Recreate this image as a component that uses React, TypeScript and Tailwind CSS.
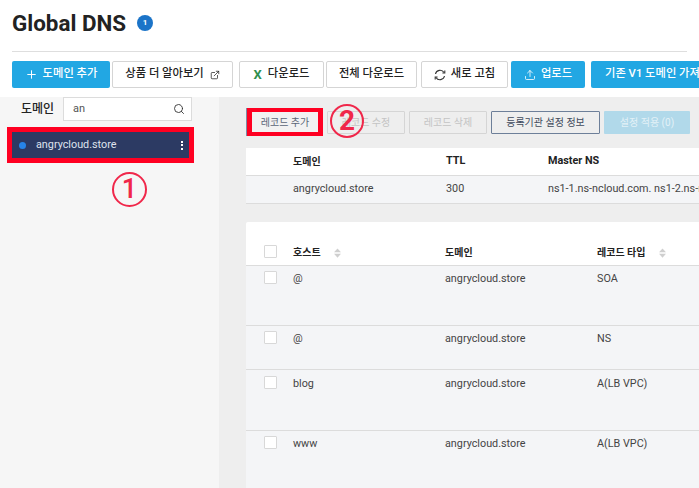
import { Plus, ExternalLink, Upload, Search } from "lucide-react";
import type { ReactNode } from "react";

const font = { fontFamily: '"Roboto", "Noto Sans CJK KR", sans-serif' };

function Check() {
  return <span className="block w-[13px] h-[13px] bg-white border border-[#d8d8d8] rounded-[1px]" />;
}

function Sort() {
  return (
    <svg width="7" height="10" viewBox="0 0 7 10" className="ml-[13px] mt-[1px] shrink-0">
      <path d="M3.5 0.5 L7 4.3 H0 Z" fill="#cfcfcf" />
      <path d="M3.5 9.7 L7 5.7 H0 Z" fill="#cfcfcf" />
    </svg>
  );
}

function Refresh() {
  return (
    <svg width="12" height="12" viewBox="0 0 12 12" fill="none" stroke="#333" strokeWidth="1.1">
      <path d="M1.5 5 A4.6 4.6 0 0 1 10 3.6" />
      <path d="M10.5 7 A4.6 4.6 0 0 1 2 8.4" />
      <path d="M10.8 1.6 V4 H8.4" fill="none" />
      <path d="M1.2 10.4 V8 H3.6" fill="none" />
    </svg>
  );
}

function TopBtn({ className, children }: { className: string; children: ReactNode }) {
  return (
    <div className={`h-[27px] flex items-center justify-center rounded-[2px] text-[11.3px] font-medium shrink-0 ${className}`}>
      {children}
    </div>
  );
}

const white = "bg-white border border-[#d5d5d5] text-[#222]";
const blue = "bg-[#22a7e3] text-white";

const rows = [
  { h: "@", t: "SOA", height: "h-[60px]", pt: "pt-[5px]" },
  { h: "@", t: "NS", height: "h-[44px]", pt: "pt-[5px]" },
  { h: "blog", t: "A(LB VPC)", height: "h-[61px]", pt: "pt-[6px]" },
  { h: "www", t: "A(LB VPC)", height: "h-[58px]", pt: "pt-[5px]" },
];

export default function App() {
  return (
    <div className="w-[699px] h-[488px] overflow-hidden bg-white flex flex-col relative" style={font}>
      <div className="h-[52px] shrink-0 mx-[12px] border-b border-[#dedede] flex items-start pt-[8px]">
        <h1 className="text-[22.4px] leading-[30px] font-bold text-[#222]">Global DNS</h1>
        <span className="ml-[11px] mt-[7px] w-4 h-4 rounded-full bg-[#1b74c8] text-white text-[8px] font-bold flex items-center justify-center">1</span>
      </div>

      <div className="h-[45px] shrink-0 pl-[12px] pt-[9px] flex items-start">
        <TopBtn className={`${blue} w-[98px] mr-[2px] gap-[5px]`}>
          <Plus size={13} strokeWidth={1.8} />
          도메인 추가
        </TopBtn>
        <TopBtn className={`${white} w-[121px] mr-[6px] gap-[6px]`}>
          상품 더 알아보기
          <ExternalLink size={10} strokeWidth={1.8} />
        </TopBtn>
        <TopBtn className={`${white} w-[85px] mr-[2px] gap-[6px]`}>
          <span className="text-[#2f8f4e] font-bold text-[13px]">X</span>
          다운로드
        </TopBtn>
        <TopBtn className={`${white} w-[91px] mr-[4px]`}>전체 다운로드</TopBtn>
        <TopBtn className={`${white} w-[87px] mr-[3px] gap-[5px]`}>
          <Refresh />
          새로 고침
        </TopBtn>
        <TopBtn className={`${blue} w-[74px] mr-[6px] gap-[5px]`}>
          <Upload size={12} strokeWidth={1.6} />
          업로드
        </TopBtn>
        <TopBtn className={`${blue} w-[130px] !justify-start pl-[14px] whitespace-nowrap`}>기존 V1 도메인 가져오기</TopBtn>
      </div>

      <div className="flex flex-1 min-h-0">
        <aside className="w-[219px] shrink-0 bg-[#f6f6f6] relative">
          <div className="flex items-center pl-[21px] h-[24px]">
            <span className="text-[12px] font-medium text-[#222] w-[42px]">도메인</span>
            <div className="w-[129px] h-[24px] bg-white border border-[#dcdcdc] flex items-center justify-between pl-[9px] pr-[6px]">
              <span className="text-[11px] text-[#555]">an</span>
              <Search size={12} strokeWidth={1.8} className="text-[#333]" />
            </div>
          </div>
          <div className="mt-[6px] ml-[7px] w-[187px] h-[36px] border-[5px] border-[#ff0022] bg-[#2c3a63] flex items-center pl-[7px] pr-[6px]">
            <span className="w-[7px] h-[7px] rounded-full bg-[#2684e8]" />
            <span className="ml-[10px] flex-1 text-[10.8px] text-[#dfe3ee]">angrycloud.store</span>
            <span className="flex flex-col gap-[1.5px]">
              <i className="block w-[2px] h-[2px] bg-white" />
              <i className="block w-[2px] h-[2px] bg-white" />
              <i className="block w-[2px] h-[2px] bg-white" />
            </span>
          </div>
        </aside>

        <main className="flex-1 min-w-0 bg-[#eeeeee] pl-[27px] overflow-hidden">
          <div className="flex items-start gap-[4px] pt-[14px] h-[51px]">
            <div className="w-[76px] h-[28px] ml-[1px] -mt-[3px] border-[5px] border-t-[4px] border-b-[4px] border-[#ff0022] bg-[#f2f2f2] shadow-[-1px_0_0_#7c8ca5] flex items-center justify-center text-[10px] text-[#5a6577] shrink-0">레코드 추가</div>
            <div className="w-[78px] h-[23px] border border-[#d5d5d5] rounded-[1px] flex items-center justify-center text-[10px] text-[#c4c4c4] shrink-0">레코드 수정</div>
            <div className="w-[78px] h-[23px] border border-[#d5d5d5] rounded-[1px] flex items-center justify-center text-[10px] text-[#c4c4c4] shrink-0">레코드 삭제</div>
            <div className="w-[109px] h-[23px] border border-[#6d7f99] rounded-[1px] flex items-center justify-center text-[10px] text-[#3f4a5c] shrink-0">등록기관 설정 정보</div>
            <div className="w-[86px] h-[23px] bg-[#b1d9ea] rounded-[1px] flex items-center justify-center text-[10px] text-[#e3f1f7] shrink-0">설정 적용 (0)</div>
          </div>

          <div className="w-[470px] bg-white">
            <div className="h-[28px] border-b border-[#dcdcdc] flex items-center text-[10.8px] font-bold text-[#222] whitespace-nowrap">
              <span className="ml-[47px] w-[153px] shrink-0 text-[10px]">도메인</span>
              <span className="w-[102px] shrink-0">TTL</span>
              <span>Master NS</span>
            </div>
            <div className="h-[28px] bg-[#f4f5f7] border-b border-[#dcdcdc] flex items-center text-[10.8px] text-[#444] whitespace-nowrap">
              <span className="ml-[47px] w-[153px] shrink-0">angrycloud.store</span>
              <span className="w-[102px] shrink-0">300</span>
              <span className="shrink-0">ns1-1.ns-ncloud.com. ns1-2.ns-ncloud.com.</span>
            </div>
          </div>

          <div className="w-[470px] mt-[18px] bg-white rounded-t-[2px]">
            <div className="h-[44px] border-b border-[#dcdcdc] flex items-start pt-[23px] text-[10px] font-bold text-[#222]">
              <span className="ml-[18px] w-[29px] shrink-0"><Check /></span>
              <span className="w-[152px] shrink-0 flex items-center">호스트<Sort /></span>
              <span className="w-[152px] shrink-0">도메인</span>
              <span className="flex items-center">레코드 타입<Sort /></span>
            </div>
            {rows.map((r, i) => (
              <div key={i} className={`${r.height} ${r.pt} bg-[#f4f5f7] border-b border-[#dcdcdc] flex items-start text-[10.8px] text-[#444]`}>
                <span className="ml-[18px] w-[29px] shrink-0"><Check /></span>
                <span className="w-[152px] shrink-0">{r.h}</span>
                <span className="w-[152px] shrink-0">angrycloud.store</span>
                <span>{r.t}</span>
              </div>
            ))}
          </div>
        </main>
      </div>

      <span aria-hidden className="absolute left-[112px] top-[172px] w-[35px] h-[35px] rounded-full border-[2px] border-[#f0274a] text-[#f0274a] text-[27px] font-medium flex items-center justify-center">1</span>
      <span aria-hidden className="absolute left-[330px] top-[104px] w-[34px] h-[34px] rounded-full border-[2px] border-[#f0274a] text-[#f0274a] text-[28px] font-bold flex items-center justify-center">2</span>
    </div>
  );
}
